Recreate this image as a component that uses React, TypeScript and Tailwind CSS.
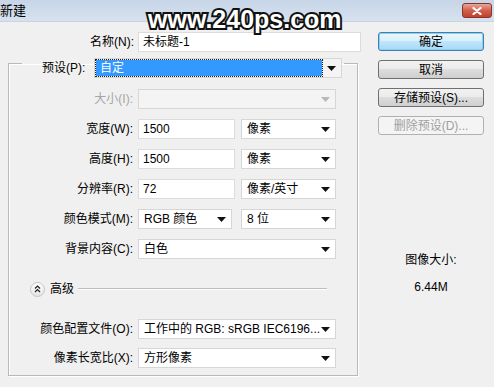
import React from "react";

const font = "font-['Liberation_Sans','Noto_Sans_CJK_SC',sans-serif]";

// 下拉箭头
function Arrow({ disabled = false }: { disabled?: boolean }) {
  return (
    <svg width="9" height="5" viewBox="0 0 9 5" className="shrink-0">
      <path d="M0 0 L9 0 L4.5 5 Z" fill={disabled ? "#b8b8b8" : "#111"} />
    </svg>
  );
}

function Select({ value, w, disabled = false }: { value: string; w: string; disabled?: boolean }) {
  return (
    <div
      className={`${w} h-[20px] flex items-center justify-between pl-[5px] pr-[5px] border border-[#d6d6d6] ${
        disabled ? "bg-[#f4f4f4]" : "bg-white"
      }`}
    >
      <span className="text-[12px] text-black whitespace-nowrap overflow-hidden">{value}</span>
      <Arrow disabled={disabled} />
    </div>
  );
}

function TextInput({ value, w }: { value: string; w: string }) {
  return (
    <div className={`${w} h-[20px] flex items-center pl-[4px] bg-white border border-[#dcdcdc]`}>
      <span className="text-[12px] text-black">{value}</span>
    </div>
  );
}

function Row({ label, children, disabled = false, className = "" }: { label: string; children: React.ReactNode; disabled?: boolean; className?: string }) {
  return (
    <div className={`flex items-center h-[20px] ${className}`}>
      <div className={`w-[125px] text-right text-[12px] pr-[1px] ${disabled ? "text-[#a6a6a6]" : "text-black"}`}>{label}</div>
      <div className="ml-[4px] flex items-center gap-[6px]">{children}</div>
    </div>
  );
}

function Btn({ text, primary = false, disabled = false }: { text: string; primary?: boolean; disabled?: boolean }) {
  let cls = "border-[#707070] bg-[linear-gradient(#f2f2f2,#ebebeb_45%,#dddddd_50%,#cfcfcf)] text-black";
  if (primary) cls = "border-[#3c7fb1] bg-[linear-gradient(#eaf6fd,#d9f0fc_45%,#bee6fd_50%,#a7d9f5)] text-black shadow-[inset_0_0_0_1px_#8fd0f0]";
  if (disabled) cls = "border-[#adb2b5] bg-[#f4f4f4] text-[#a0a0a0]";
  return (
    <div className={`w-[106px] h-[19px] rounded-[3px] border flex items-center justify-center text-[12px] ${cls}`}>
      {text}
    </div>
  );
}

export default function App() {
  return (
    <div className={`relative w-[494px] h-[387px] bg-[#f0f0f0] overflow-hidden ${font}`}>
      {/* 标题栏 */}
      <div className="h-[22px] flex items-center justify-between bg-[linear-gradient(#c6d5e7,#d7e2ef)] border-b border-[#c9d4e1]">
        <span className="text-[13px] text-black leading-none ml-0">新建</span>
        <div className="mr-[2px] w-[30px] h-[15px] rounded-[3px] border border-[#8a3328] bg-[linear-gradient(#e6a79c,#d0604d_50%,#c2412c)] flex items-center justify-center">
          <svg width="10" height="8" viewBox="0 0 10 8">
            <path d="M1.5 1 L8.5 7 M8.5 1 L1.5 7" stroke="white" strokeWidth="2.2" strokeLinecap="round" />
          </svg>
        </div>
      </div>

      <div className="flex">
        {/* 左侧 */}
        <div className="w-[366px] pl-[8px]">
          <div className="mt-[10px] flex items-center h-[20px]">
            <div className="w-[126px] text-right text-[12px] text-black">名称(N):</div>
            <TextInput value="未标题-1" w="ml-[4px] w-[223px]" />
          </div>

          <fieldset className="mt-[6px] w-[350px] border border-[#b9b9b9] shadow-[inset_1px_1px_0_white,1px_1px_0_white] pb-[7px]">
            <legend className="ml-[13px] h-[10px] px-0 overflow-visible">
              <div className="flex items-center h-[20px] pl-[20px] pr-[2px]">
                <span className="text-[12px] text-black w-[46px]">预设(P):</span>
                <div className="ml-[6px] w-[248px] h-[20px] flex items-center bg-[#f4f4f4] border border-[#d6d6d6]">
                  <div className="ml-[1px] w-[226px] h-[16px] bg-[#3399ff] outline-1 outline-dotted outline-[#1a1a1a] flex items-center pl-[4px]">
                    <span className="text-[12px] text-white">自定</span>
                  </div>
                  <div className="flex-1 flex justify-center">
                    <Arrow />
                  </div>
                </div>
              </div>
            </legend>

            <Row label="大小(I):" disabled className="mt-[21px]">
              <Select value="" w="w-[198px]" disabled />
            </Row>
            <Row label="宽度(W):" className="mt-[10px]">
              <TextInput value="1500" w="w-[97px]" />
              <Select value="像素" w="w-[95px]" />
            </Row>
            <Row label="高度(H):" className="mt-[10px]">
              <TextInput value="1500" w="w-[97px]" />
              <Select value="像素" w="w-[95px]" />
            </Row>
            <Row label="分辨率(R):" className="mt-[10px]">
              <TextInput value="72" w="w-[97px]" />
              <Select value="像素/英寸" w="w-[95px]" />
            </Row>
            <Row label="颜色模式(M):" className="mt-[10px]">
              <Select value="RGB 颜色" w="w-[94px]" />
              <Select value="8 位" w="ml-[3px] w-[95px]" />
            </Row>
            <Row label="背景内容(C):" className="mt-[10px]">
              <Select value="白色" w="w-[198px]" />
            </Row>

            {/* 高级 */}
            <div className="mt-[22px] flex items-center h-[16px] pl-[21px]">
              <div className="w-[15px] h-[15px] rounded-full border border-[#c4c4c4] bg-[linear-gradient(#ffffff,#e4e4e4)] flex items-center justify-center">
                <svg width="7" height="8" viewBox="0 0 7 8">
                  <path d="M1 3.5 L3.5 1 L6 3.5 M1 7 L3.5 4.5 L6 7" stroke="#222" strokeWidth="1.2" fill="none" />
                </svg>
              </div>
              <span className="ml-[5px] text-[12px] text-black">高级</span>
              <div className="ml-[4px] w-[249px] h-[2px] border-t border-[#bdbdbd] border-b border-b-white" />
            </div>

            <Row label="颜色配置文件(O):" className="mt-[22px]">
              <Select value="工作中的 RGB: sRGB IEC6196..." w="w-[198px]" />
            </Row>
            <Row label="像素长宽比(X):" className="mt-[9px]">
              <Select value="方形像素" w="w-[198px]" />
            </Row>
          </fieldset>
        </div>

        {/* 右侧 */}
        <div className="flex-1 flex flex-col pl-[12px]">
          <div className="mt-[10px] flex flex-col gap-[9px]">
            <Btn text="确定" primary />
            <Btn text="取消" />
            <Btn text="存储预设(S)..." />
            <Btn text="删除预设(D)..." disabled />
          </div>
          <div className="w-[106px] mt-[116px] flex flex-col items-center text-[12px] text-black">
            <span>图像大小:</span>
            <span className="mt-[9px]">6.44M</span>
          </div>
        </div>
      </div>

      {/* 水印 */}
      <div className="absolute left-[148px] top-[7px] text-[25px] font-bold text-white leading-none font-['Liberation_Sans',sans-serif] [-webkit-text-stroke:4px_#111] [paint-order:stroke_fill]">
        www.240ps.com
      </div>
    </div>
  );
}
